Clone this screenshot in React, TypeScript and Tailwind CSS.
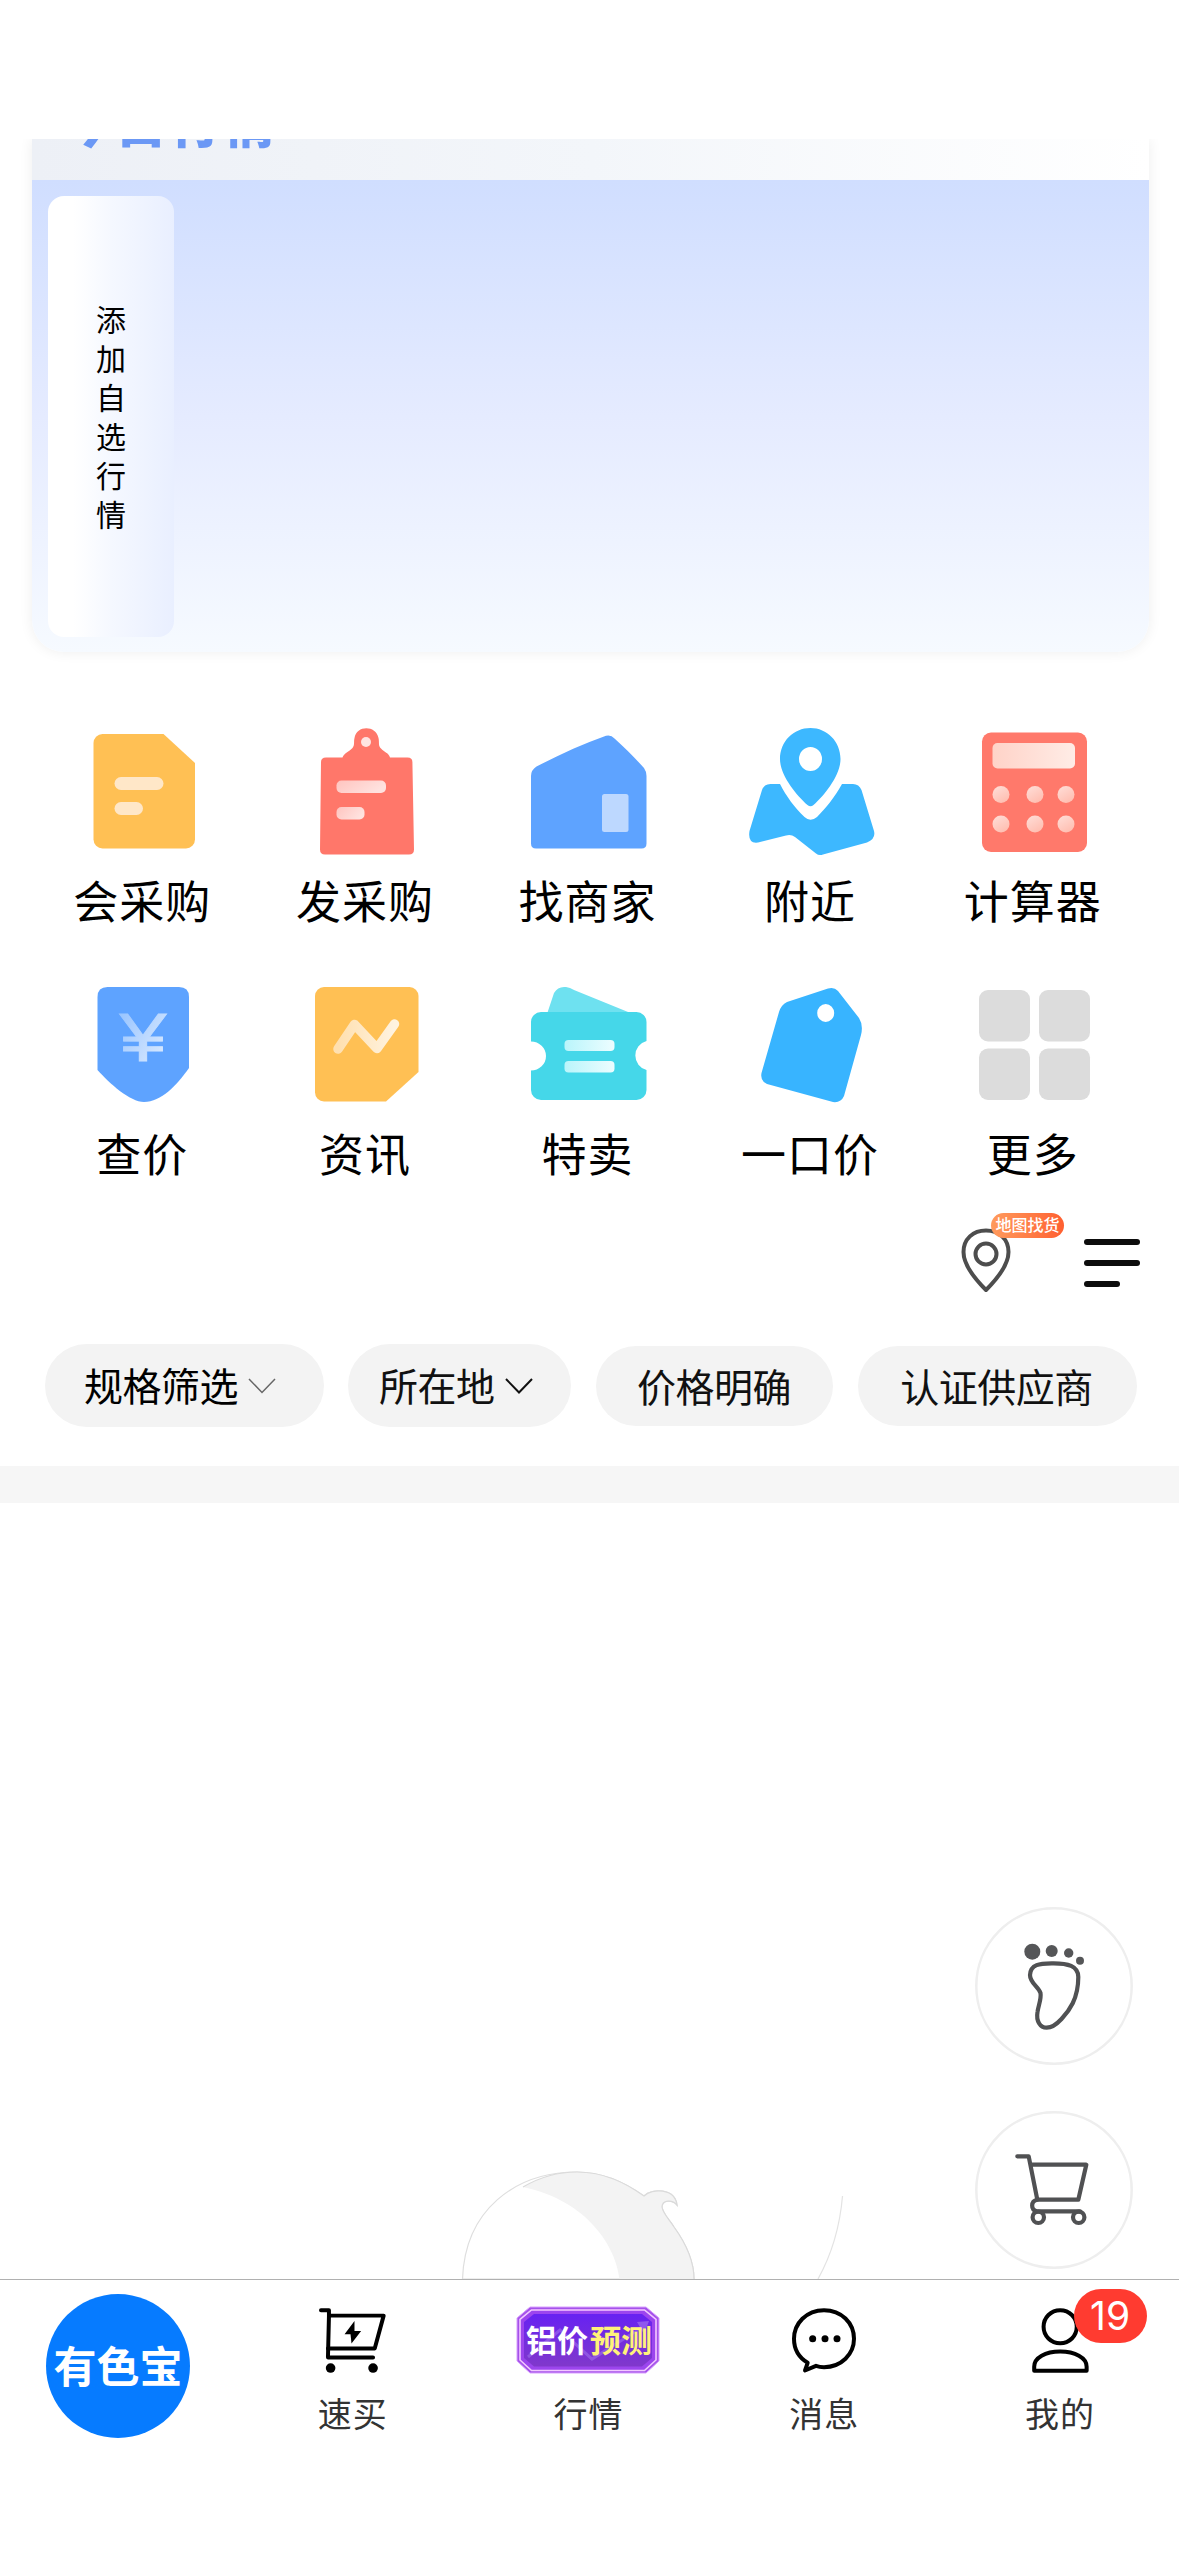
import React from 'react';

const FONT = "font-['Noto_Sans_CJK_SC','Liberation_Sans',sans-serif]";

function Svg({ children }: { children: React.ReactNode }) {
  return (
    <svg viewBox="0 0 150 150" className="block h-[150px] w-[150px]">
      {children}
    </svg>
  );
}

const PurchaseIcon = () => (
  <Svg>
    <path d="M33.5 18H94.5L126 47V123.500A9 9 0 0 1 117 132.500H33.500A9 9 0 0 1 24.500 123.500V27A9 9 0 0 1 33.500 18Z" fill="#ffc054" />
    <rect x="45.500" y="61" width="49" height="13" rx="6.500" fill="#ffe7c8" />
    <rect x="45.500" y="86" width="28.500" height="13" rx="6.500" fill="#ffe7c8" />
  </Svg>
);

const PublishIcon = () => (
  <Svg>
    <defs>
      <linearGradient id="pub" x1="0" y1="0" x2="1" y2="0.400">
        <stop offset="0" stopColor="#ffc4bf" />
        <stop offset="1" stopColor="#ffe2df" />
      </linearGradient>
    </defs>
    <path
      d="M34 41.500H50.500C52 37 57 36 60.500 32C63 29 61.500 26 62.500 22C64.500 9 84 9 86.500 22C87.500 26 86 30 89 32.500C92 36 97 37 98 41.500H115.500Q120.400 41.500 120.400 46L122 133.500Q122 138.500 117 138.500H33Q28 138.500 28 133.500L29 46Q29 41.500 34 41.500Z"
      fill="#ff776a"
    />
    <circle cx="74" cy="26" r="5" fill="#ffe4e1" />
    <rect x="44.500" y="64.500" width="49.500" height="12.500" rx="5" fill="url(#pub)" />
    <rect x="44.500" y="91" width="28" height="12.500" rx="5" fill="url(#pub)" />
  </Svg>
);

const MerchantIcon = () => (
  <Svg>
    <path d="M17 60Q17 54 22.500 50.500C45 39 68 28 92 19.800Q97 18.500 100.500 22.500C111 32 121 42 130 52Q132.500 55.500 132.500 60V127.500Q132.500 132.500 127.500 132.500H22Q17 132.500 17 127.500Z" fill="#5ea3ff" />
    <rect x="88" y="78" width="26.500" height="38" rx="2.500" fill="#bdd8ff" />
  </Svg>
);

const NearbyIcon = () => (
  <Svg>
    <path
      fillRule="evenodd"
      d="M73.500 12C56.500 12 43 25.500 43 43C43 59 59 79 70.500 89Q73.500 91.500 76.500 89C88 79 103.500 59 103.500 43C103.500 25.500 90 12 73.500 12ZM73.500 31A11.500 12 0 1 1 73.500 55A11.500 12 0 1 1 73.500 31Z"
      fill="#3db8ff"
    />
    <path d="M43 68H33.500Q27 68 25 74L12.500 115Q10.500 128 21 126.500L49 119.500Q54 118 58 121L79 137.500Q82 140 86 138.500L130 126.500Q139 123 137 115L124.500 74Q122 68 116 68H105C98 81 88 93 80 101Q73.500 106.500 67.500 101C58 92 49 80 43 68Z" fill="#3db8ff" />
  </Svg>
);

const CalculatorIcon = () => (
  <Svg>
    <defs>
      <linearGradient id="calc" x1="0" y1="0" x2="1" y2="0">
        <stop offset="0" stopColor="#ffd3c8" />
        <stop offset="1" stopColor="#ffece6" />
      </linearGradient>
      <linearGradient id="calcDot" x1="0" y1="0" x2="0.600" y2="1">
        <stop offset="0" stopColor="#ffdfd9" />
        <stop offset="1" stopColor="#ffbfb2" />
      </linearGradient>
    </defs>
    <rect x="22" y="16.500" width="105" height="119.500" rx="9" fill="#ff796b" />
    <rect x="32.500" y="27" width="82.500" height="25.500" rx="5" fill="url(#calc)" />
    {[41, 75, 106].map((x) =>
      [78.5, 108].map((y) => <circle key={`${x}-${y}`} cx={x} cy={y} r="8.500" fill="url(#calcDot)" />),
    )}
  </Svg>
);

const PriceIcon = () => (
  <Svg>
    <defs>
      <linearGradient id="yen" x1="0" y1="0" x2="1" y2="1">
        <stop offset="0" stopColor="#8fbfff" />
        <stop offset="1" stopColor="#e6f1ff" />
      </linearGradient>
    </defs>
    <path d="M38.500 18H110Q120 18 120 28V99C108 116 92 133 75 133C61 133 40 114 28.500 101V28Q28.500 18 38.500 18Z" fill="#5ea3ff" />
    <text x="50.500" y="92" textLength="47" lengthAdjust="spacingAndGlyphs" fontSize="69" fill="url(#yen)" stroke="url(#yen)" strokeWidth="0.800" className="font-['Liberation_Sans',sans-serif]">
      ¥
    </text>
  </Svg>
);

const NewsIcon = () => (
  <Svg>
    <defs>
      <linearGradient id="news" x1="0" y1="0" x2="1" y2="0">
        <stop offset="0" stopColor="#ffe0b0" />
        <stop offset="1" stopColor="#fff3e0" />
      </linearGradient>
    </defs>
    <path d="M32 18H117.500A9 9 0 0 1 126.500 27V103L94 132.500H32A9 9 0 0 1 23 123.500V27A9 9 0 0 1 32 18Z" fill="#ffc054" />
    <path d="M46 80L62.500 55.500L85 79.500L102.500 55" fill="none" stroke="url(#news)" strokeWidth="9.500" strokeLinecap="round" strokeLinejoin="round" />
  </Svg>
);

const SaleIcon = () => (
  <Svg>
    <defs>
      <linearGradient id="sale" x1="0" y1="0" x2="1" y2="0">
        <stop offset="0" stopColor="#b9f5fb" />
        <stop offset="1" stopColor="#edfdff" />
      </linearGradient>
    </defs>
    <path d="M33 45L40 24Q44 17 52 18Q56 18.500 60 21L119 45Z" fill="#6ee1f0" />
    <path
      d="M27 43H122.500A10 10 0 0 1 132.500 53V72A15 15 0 0 0 132.500 101V121A10 10 0 0 1 122.500 131H27A10 10 0 0 1 17 121V101.500A15 14.500 0 0 0 17 72.500V53A10 10 0 0 1 27 43Z"
      fill="#45d7e9"
    />
    <rect x="50.500" y="71" width="50" height="11" rx="4" fill="url(#sale)" />
    <rect x="50.500" y="92" width="50" height="11.500" rx="4" fill="url(#sale)" />
  </Svg>
);

const TagIcon = () => (
  <Svg>
    <path
      fillRule="evenodd"
      d="M50 33L91 19.500Q97 17.500 101 22L122 49Q126.500 56 124 66L107 127Q104 134 96 133L30 115Q23 112 24.500 104L42 43Q44 36 50 33ZM88.700 35A8.500 9 0 1 0 88.700 53A8.500 9 0 1 0 88.700 35Z"
      fill="#38b4ff"
    />
  </Svg>
);

const MoreIcon = () => (
  <Svg>
    {[19, 79].map((x) =>
      [21, 79.5].map((y) => <rect key={`${x}-${y}`} x={x} y={y} width="51" height="51.500" rx="9" fill="#dcdcdc" />),
    )}
  </Svg>
);

const menu = [
  { label: '会采购', Icon: PurchaseIcon },
  { label: '发采购', Icon: PublishIcon },
  { label: '找商家', Icon: MerchantIcon },
  { label: '附近', Icon: NearbyIcon },
  { label: '计算器', Icon: CalculatorIcon },
  { label: '查价', Icon: PriceIcon },
  { label: '资讯', Icon: NewsIcon },
  { label: '特卖', Icon: SaleIcon },
  { label: '一口价', Icon: TagIcon },
  { label: '更多', Icon: MoreIcon },
];

function QuoteCard() {
  return (
    <section className="mt-[139px] h-[577px] shrink-0 overflow-hidden pr-[30px] pl-8">
      <div className="h-[513px] overflow-hidden rounded-b-[32px] shadow-[0_0_14px_rgba(0,0,0,0.07)]">
        <div className="h-[41px] overflow-hidden bg-gradient-to-r from-[#edf0f6] via-[#f3f6fa] to-white pl-[29px]">
          <div className="-mt-[44px] text-[52px] leading-[52px] font-black tracking-[2px] text-[#6b98f5]">今日行情</div>
        </div>
        <div className="h-[472px] bg-gradient-to-b from-[#d0deff] via-[#e5ebff] to-[#f6faff] pt-4 pl-4">
          <div className="flex h-[441px] w-[126px] items-center justify-center rounded-2xl bg-gradient-to-r from-white from-20% via-[#f5f8ff] to-[#e9efff]">
            <div className="mb-[2px] w-[30px] text-[30px] leading-[39px] text-black">添加自选行情</div>
          </div>
        </div>
      </div>
    </section>
  );
}

function MenuGrid() {
  return (
    <section className="grid h-[486px] shrink-0 grid-cols-5 content-start px-[33px]">
      {menu.map(({ label, Icon }) => (
        <div key={label} className="flex h-[253px] flex-col items-center">
          <Icon />
          <div className="mt-[7px] mr-[4px] text-[45px] leading-[54px] tracking-[1px] text-black">{label}</div>
        </div>
      ))}
    </section>
  );
}

function ToolRow() {
  return (
    <section className="flex h-[142px] shrink-0 justify-end pr-[39px]">
      <div className="relative mt-[11px] h-[80px] w-[103px]">
        <svg viewBox="0 0 54 68" className="mt-[13px] -ml-[2px] block h-[68px] w-[54px]">
          <path d="M27 4.500C14 4.500 4.500 13 4.500 26C4.500 39 16 53 27 64C38 53 49.500 39 49.500 26C49.500 13 40 4.500 27 4.500Z" fill="none" stroke="#4d4d4d" strokeWidth="4" strokeLinejoin="round" />
          <circle cx="27" cy="28" r="10.500" fill="none" stroke="#4d4d4d" strokeWidth="4" />
        </svg>
        <span className="absolute top-0 left-[30px] flex h-[25px] w-[73px] items-center justify-center rounded-full bg-gradient-to-r from-[#ff9a5c] to-[#ff5f30] pb-[2px] text-[16px] leading-[23px] font-medium whitespace-nowrap text-white">
          地图找货
        </span>
      </div>
      <div className="mt-[37px] ml-5 flex w-14 flex-col gap-[15px]">
        <div className="h-[6px] w-14 rounded-full bg-[#0d0d0d]" />
        <div className="h-[6px] w-14 rounded-full bg-[#0d0d0d]" />
        <div className="h-[6px] w-9 rounded-full bg-[#0d0d0d]" />
      </div>
    </section>
  );
}

function Chevron({ thin }: { thin?: boolean }) {
  return (
    <svg viewBox="0 0 28 16" className="block h-4 w-7">
      <path d="M1 1L14 14.500L27 1" fill="none" stroke={thin ? '#666' : '#111'} strokeWidth={thin ? 1.5 : 2} />
    </svg>
  );
}

function Filters() {
  const text = 'text-[39px] leading-[50px] -mt-[3px] tracking-[-0.500px] whitespace-nowrap';
  return (
    <section className="flex h-[122px] shrink-0 items-start pl-[45px] text-[#111]">
      <div className="flex h-[83px] w-[279px] items-center rounded-full bg-[#f3f3f3] pl-[39px] text-black">
        <span className={text}>规格筛选</span>
        <span className="ml-[10px]"><Chevron thin /></span>
      </div>
      <div className="ml-6 flex h-[83px] w-[223px] items-center rounded-full bg-[#f3f3f3] pl-[31px]">
        <span className={text}>所在地</span>
        <span className="ml-[10px]"><Chevron /></span>
      </div>
      <div className="mt-[2px] ml-[25px] flex h-20 w-[237px] items-center justify-center rounded-full bg-[#f3f3f3] pr-px">
        <span className={text}>价格明确</span>
      </div>
      <div className="mt-[2px] ml-[25px] flex h-20 w-[279px] items-center justify-center rounded-full bg-[#f3f3f3] pr-[2px]">
        <span className={text}>认证供应商</span>
      </div>
    </section>
  );
}

function EmptyDrawing() {
  return (
    <svg viewBox="0 0 390 109" className="block h-[109px] w-[390px]">
      <path d="M2.500 109C5 40 55 2 117 2C145 2 166 13 184 26C192 18 215 18 217 35C212 29 202 30 202 37C203 44 210 50 214 57C227 75 234 92 234 109Z" fill="#fff" stroke="#dedede" strokeWidth="1.200" />
      <path d="M63 17C80 7 99 2 117 2C145 2 166 13 184 26C192 18 215 18 217 35C212 29 202 30 202 37C203 44 210 50 214 57C227 75 234 92 234 109H159.500C156 78 129 31 63 17Z" fill="#f3f3f3" />
      <path d="M63 17C80 7 99 2 117 2C145 2 166 13 184 26C192 18 215 18 217 35C212 29 202 30 202 37C203 44 210 50 214 57C227 75 234 92 234 109" fill="none" stroke="#dadada" strokeWidth="1.200" />
      <path d="M382.500 26C380 56 373 82 358 109" fill="none" stroke="#e3e3e3" strokeWidth="1.200" />
    </svg>
  );
}

function FloatButtons() {
  return (
    <div className="absolute top-[404px] right-[46px] flex flex-col gap-[46px]">
      <svg viewBox="0 0 158 158" className="block h-[158px] w-[158px]">
        <circle cx="79" cy="79" r="77.700" fill="#fff" stroke="#eeeeee" strokeWidth="2.500" />
        <g fill="#555658">
          <circle cx="57.300" cy="44.700" r="8" />
          <circle cx="76.700" cy="44" r="6" />
          <circle cx="93.700" cy="46" r="4.700" />
          <circle cx="105" cy="53.700" r="4" />
        </g>
        <path d="M76.700 56.300C93 56 103.300 59 103.300 70C103.300 92 94 104 86.500 112C80 119 75 120.700 71.700 120.700C65 120.700 61 114 62.500 105C63.500 98 66.500 92 65.500 86C63 79 55 76 55 68C55.500 57 65 56.500 76.700 56.300Z" fill="none" stroke="#505153" strokeWidth="4.200" />
      </svg>
      <svg viewBox="0 0 158 158" className="block h-[158px] w-[158px]">
        <circle cx="79" cy="79" r="77.700" fill="#fff" stroke="#eeeeee" strokeWidth="2.500" />
        <g fill="none" stroke="#505153" strokeWidth="4.200" strokeLinecap="round" strokeLinejoin="round">
          <path d="M42.300 45.300H53.700L62.300 88.700H103.300L111.300 53.700H56" />
          <path d="M62.300 88.700C55.500 90 55.500 99 62 100.300H105" />
          <circle cx="63.300" cy="106.300" r="5.700" />
          <circle cx="103.700" cy="106.300" r="5.700" />
        </g>
      </svg>
    </div>
  );
}

const CartTabIcon = () => (
  <svg viewBox="0 0 202 196" className="block h-[65px] w-[67px]">
    <g fill="none" stroke="#000" strokeWidth="12" strokeLinecap="round" strokeLinejoin="round">
      <path d="M6 7H30V24L27 149H163" />
      <path d="M30 23H195L168 122H27" />
    </g>
    <path d="M107 39L77 79H95L98 107L127 69H107Z" fill="#000" />
    <circle cx="35" cy="181" r="14.500" />
    <circle cx="163" cy="181" r="14.500" />
  </svg>
);

const MessageTabIcon = () => (
  <svg viewBox="0 0 192 194" className="block h-[65px] w-[64px]">
    <path d="M96 6C43 6 6 46 6 92C6 124 22 149 47 164L39 187L72 173C80 176 88 177 96 177C148 177 186 138 186 92C186 44 148 6 96 6Z" fill="none" stroke="#000" strokeWidth="12" strokeLinejoin="round" />
    <circle cx="62" cy="92" r="10.500" />
    <circle cx="99" cy="92" r="10.500" />
    <circle cx="135" cy="92" r="10.500" />
  </svg>
);

const UserTabIcon = () => (
  <svg viewBox="0 0 170 194" className="block h-[65px] w-[57px]">
    <g fill="none" stroke="#000" strokeWidth="12" strokeLinejoin="round">
      <circle cx="84" cy="56" r="49.500" />
      <path d="M6.500 187V175C6.500 148 40 130 84 130C128 130 163 148 163 175V187Z" />
    </g>
  </svg>
);

const ForecastBadge = () => (
  <svg viewBox="0 0 144 68" className="block h-[68px] w-[144px]">
    <defs>
      <linearGradient id="fc" x1="0" y1="0" x2="0" y2="1">
        <stop offset="0" stopColor="#6722f2" />
        <stop offset="1" stopColor="#8038cb" />
      </linearGradient>
    </defs>
    <path d="M14 1H130L143 12V55L130 67H14L1 55V12Z" fill="#a552ea" stroke="#d9a0ff" strokeWidth="1" />
    <path d="M15.500 4H128.500L140 13.500V54L128.500 64.500H15.500L4 54V13.500Z" fill="#9c45ee" stroke="#f3c9ff" strokeWidth="1.600" />
    <path d="M18 8H126L136 16V52L126 60.500H18L8 52V16Z" fill="url(#fc)" />
    <path d="M12 51L44 24L76 53L125 22" fill="none" stroke="#a679f0" strokeWidth="3" opacity="0.500" />
    <path d="M121 16L133 15L128 28Z" fill="#a679f0" opacity="0.600" />
    <text x="10" y="45.500" fontSize="31" fontWeight="700" fill="#fff">铝价</text>
    <text x="74" y="45.500" fontSize="31" fontWeight="700" fill="#fff27a">预测</text>
  </svg>
);

function Tab({ label, children }: { label: string; children: React.ReactNode }) {
  return (
    <div className="flex w-1/5 flex-col items-center pr-[2px]">
      <div className="mt-[25px] flex h-[70px] items-center">{children}</div>
      <div className="mt-[14px] text-[34px] leading-[48px] tracking-[1px] text-[#333]">{label}</div>
    </div>
  );
}

function TabBar() {
  return (
    <nav className="flex h-[277px] shrink-0 border-t border-[#b0b0b0] bg-white">
      <div className="flex w-1/5 justify-center">
        <div className="mt-[14px] flex h-36 w-36 items-center justify-center rounded-full bg-[#067bff] pb-[5px] text-[43px] leading-[60px] font-bold whitespace-nowrap text-white">
          有色宝
        </div>
      </div>
      <Tab label="速买"><CartTabIcon /></Tab>
      <Tab label="行情"><ForecastBadge /></Tab>
      <Tab label="消息"><MessageTabIcon /></Tab>
      <Tab label="我的">
        <div className="relative">
          <UserTabIcon />
          <span className="absolute -top-[19px] left-[42px] flex h-[54px] w-[73px] items-center justify-center rounded-full bg-[#ff3b30] font-['Inter',sans-serif] text-[39px] leading-[54px] text-white">
            19
          </span>
        </div>
      </Tab>
    </nav>
  );
}

export default function App() {
  return (
    <div className={`flex h-[2556px] w-[1179px] flex-col overflow-hidden bg-white ${FONT}`}>
      <QuoteCard />
      <MenuGrid />
      <ToolRow />
      <Filters />
      <div className="h-[37px] shrink-0 bg-[#f6f6f6]" />
      <main className="relative flex min-h-0 flex-1 items-end pl-[460px]">
        <EmptyDrawing />
        <FloatButtons />
      </main>
      <TabBar />
    </div>
  );
}
